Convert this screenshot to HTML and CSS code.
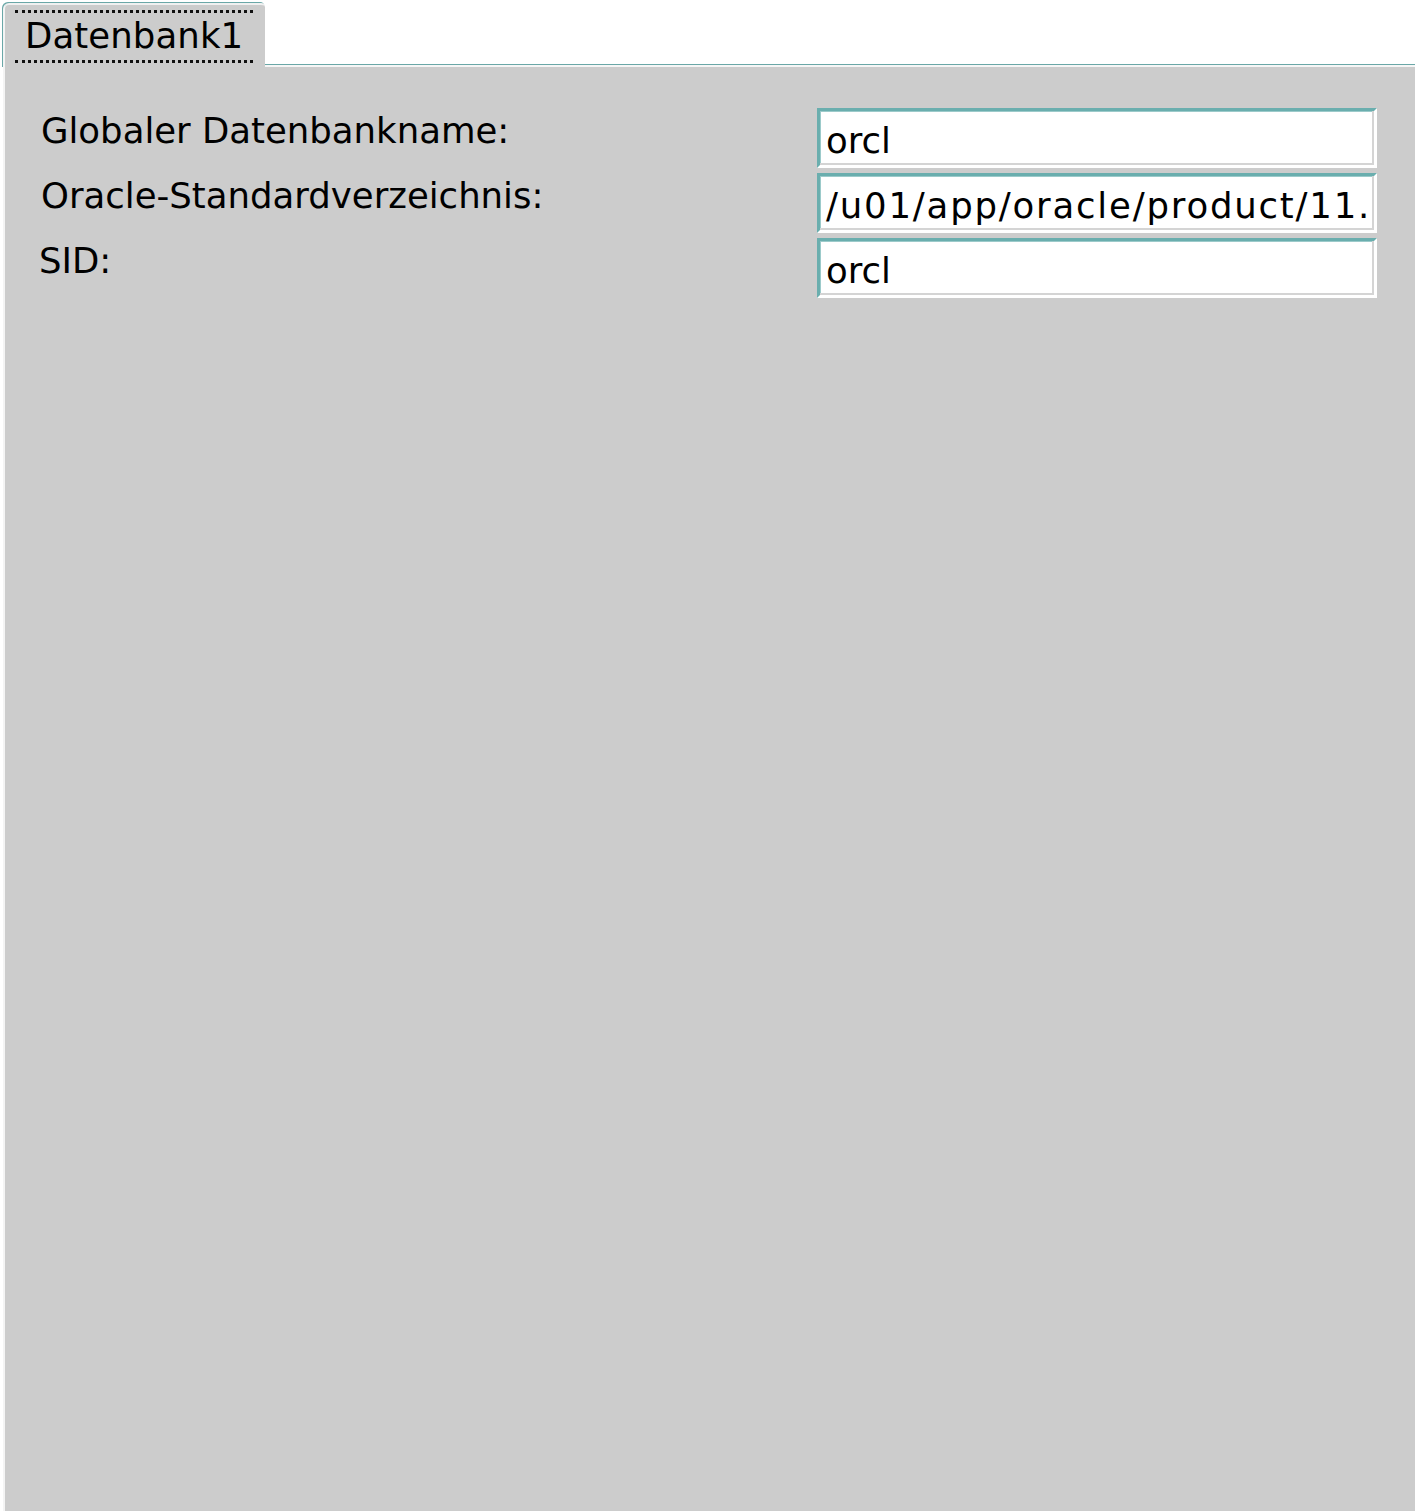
FILE: index.html
```html
<!DOCTYPE html>
<html lang="de">
<head>
<meta charset="utf-8">
<title>Datenbank1</title>
<link rel="stylesheet" href="styles.css">
</head>
<body>
<div class="tabs">
  <div class="tab"><span class="tab-label">Datenbank1</span></div>
</div>
<div class="panel">
  <div class="form">
    <div class="label">Globaler Datenbankname:</div>
    <div class="field"><span class="value">orcl</span></div>
    <div class="label">Oracle-Standardverzeichnis:</div>
    <div class="field"><span class="value value-wide">/u01/app/oracle/product/11.</span></div>
    <div class="label label-sid">SID:</div>
    <div class="field"><span class="value">orcl</span></div>
  </div>
</div>
</body>
</html>
```

FILE: styles.css
```css
html, body {
  margin: 0;
  padding: 0;
  background: #ffffff;
  height: 100%;
}
body {
  font-family: "DejaVu Sans", "Liberation Sans", sans-serif;
  font-size: 35.5px;
  color: #000;
  display: flex;
  flex-direction: column;
}
.tabs {
  display: flex;
  padding: 3px 0 0 3px;
  height: 65px;
  box-sizing: border-box;
}
.tab {
  width: 262px;
  background: #cccccc;
  border-top: 2px solid #f0f0f0;
  border-left: 2px solid #f4f4f4;
  border-top-left-radius: 6px;
  border-top-right-radius: 4px;
  box-shadow: -1px -1px 0 #6aa7a7;
  padding: 5px 0 0 10px;
  box-sizing: border-box;
  position: relative;
  z-index: 1;
  margin-bottom: -3px;
}
.tab-label {
  display: inline-block;
  border-top: 3px dotted #111;
  border-bottom: 3px dotted #111;
  padding: 2px 10px 3px 10px;
  line-height: 42px;
  letter-spacing: 0.1px;
}
.panel {
  flex: 1;
  margin-left: 3px;
  margin-right: 2px;
  background: #cccccc;
  border-top: 2px solid #f6f6f6;
  border-left: 2px solid #f4f4f4;
  box-shadow: 0 -1px 0 #6aa7a7;
  padding: 41px 38px 0 36px;
}
.form {
  display: grid;
  grid-template-columns: 1fr 560px;
  grid-auto-rows: 60px;
  row-gap: 5px;
}
.label {
  padding: 5px 0 0 0;
  line-height: 36px;
  white-space: nowrap;
}
.label-sid {
  padding-left: 0;
  margin-left: -2px;
}
.field {
  background: #ffffff;
  border-style: solid;
  border-width: 3px;
  border-color: #6aaeae #ffffff #ffffff #6aaeae;
  box-shadow: inset -2px -2px 0 #d4d4d4, inset 1px 1px 0 #9ccaca;
  overflow: hidden;
  white-space: nowrap;
  padding: 12px 0 0 6px;
  box-sizing: border-box;
  line-height: 36px;
}
.value-wide {
  letter-spacing: 1.8px;
}
```
